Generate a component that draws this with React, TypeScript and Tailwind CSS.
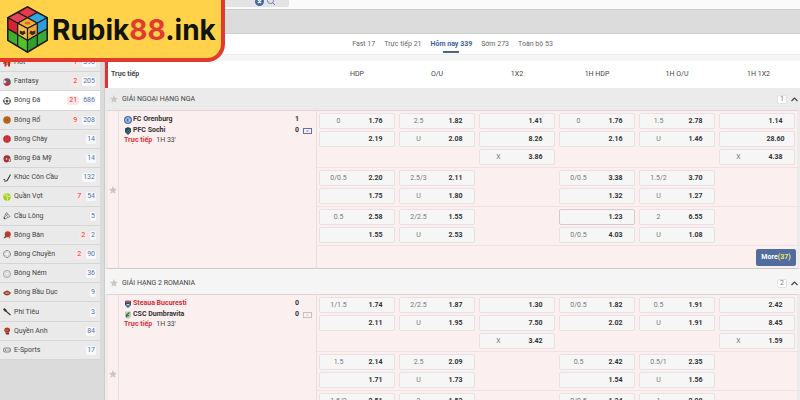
import type { ReactNode } from "react"
import clsx from "clsx"

type Sport = {
	name: string
	live?: number
	total: number
	icon: ReactNode
	active?: boolean
}

// [label, price]
type Odd = [string, string]

type Match = {
	home: string
	away: string
	homeColor: string
	score: [number, number]
	time: string
	more: number
	crests: [ReactNode, ReactNode]
	stream: boolean
	lines: Odd[][][]
}

type League = { name: string; count: number; hovered?: boolean; match: Match }

const sports: Sport[] = [
	{
		name: "Hot",
		live: 1,
		total: 390,
		icon: (
			<>
				<path d="M0 8 8 1l8 7-2 1v6h-4v-4H7v4H3V9L1 10z" fill="#b8331f" />
				<path d="M8 5c2 2 3 3 2 5H6c0-2 2-3 2-5z" fill="#e9813a" />
			</>
		),
	},
	{
		name: "Fantasy",
		live: 2,
		total: 205,
		icon: (
			<>
				<circle cx="8" cy="8" r="7.5" fill="#51657c" />
				<path d="M8 8V0.500a7.500 7.500 0 0 0-6.500 11z" fill="#d8dde3" />
				<path d="M8 8V0.500a7.500 7.500 0 0 0-6 3z" fill="#cf2e35" />
				<path d="M8 8 3 13.500a7.500 7.500 0 0 0 12-3z" fill="#cf2e35" />
			</>
		),
	},
	{
		name: "Bóng Đá",
		live: 21,
		total: 686,
		active: true,
		icon: (
			<>
				<circle cx="8" cy="8" r="6.8" fill="#fff" stroke="#555" strokeWidth="1.4" />
				<path d="m8 5 3 2-1 4H6L5 7z" fill="#555" />
				<path d="M6 1h4L8 3zM1 6l2 2-1 3zM15 6l-2 2 1 3zM4 14l1-2 2 2zM12 14l-1-2-2 2z" fill="#444" stroke="#444" />
			</>
		),
	},
	{
		name: "Bóng Rổ",
		live: 9,
		total: 208,
		icon: (
			<>
				<circle cx="8" cy="8" r="7.5" fill="#c0651c" />
				<path d="M8 1v14M1 8h14M3 3c4 3 4 7 0 10M13 3c-4 3-4 7 0 10" stroke="#a3541a" fill="none" />
			</>
		),
	},
	{
		name: "Bóng Chày",
		total: 14,
		icon: (
			<>
				<circle cx="8" cy="8" r="7.5" fill="#c8222c" />
				<path d="M4 2c3 4 3 8 0 12M12 2c-3 4-3 8 0 12" stroke="#e06a70" fill="none" />
			</>
		),
	},
	{
		name: "Bóng Đá Mỹ",
		total: 14,
		icon: (
			<>
				<path d="M1 8a7 7 0 0 1 14-1l-4 1 1 4-4 3a7 7 0 0 1-7-7z" fill="#b52a2a" />
				<path d="M8 8h7v5h-4M5 4l4 1" stroke="#5b6470" strokeWidth="1.5" fill="none" />
				<circle cx="7" cy="8" r="1.6" fill="#eee" />
			</>
		),
	},
	{
		name: "Khúc Côn Cầu",
		total: 132,
		icon: (
			<>
				<path d="M15 1 9 12q-1 2-3 2H2" stroke="#3c3c3c" strokeWidth="2.2" fill="none" />
				<ellipse cx="2.5" cy="11" rx="2" ry="1" fill="#3c3c3c" />
			</>
		),
	},
	{
		name: "Quần Vợt",
		live: 7,
		total: 54,
		icon: (
			<>
				<circle cx="8" cy="8" r="7.5" fill="#a6cf1d" />
				<path d="M2 4c5 0 8 4 7 11M7 1c0 4 3 7 8 6" stroke="#ecf7b8" strokeWidth="1.5" fill="none" />
			</>
		),
	},
	{
		name: "Cầu Lông",
		total: 5,
		icon: (
			<>
				<path d="m7 1 7 8-9 4-3-3z" fill="#f4f4f4" stroke="#555" strokeWidth="1.3" />
				<path d="m6 4 4 7M4 10l6-6" stroke="#555" />
				<path d="M2 10a2.5 2.5 0 0 0 3 4z" fill="#444" />
			</>
		),
	},
	{
		name: "Bóng Bàn",
		live: 2,
		total: 2,
		icon: (
			<>
				<circle cx="9.5" cy="6.5" r="6" fill="#b93a30" />
				<path d="m5 9-4 5 1 1 6-3z" fill="#7d4a2c" />
				<circle cx="13" cy="13" r="1.8" fill="#d66a52" />
			</>
		),
	},
	{
		name: "Bóng Chuyền",
		live: 2,
		total: 90,
		icon: (
			<>
				<circle cx="8" cy="8" r="6.8" fill="#f4f4f4" stroke="#666" strokeWidth="1.8" strokeDasharray="6 1" />
				<circle cx="8" cy="8" r="4" fill="none" stroke="#bbb" />
			</>
		),
	},
	{
		name: "Bóng Ném",
		total: 36,
		icon: (
			<>
				<circle cx="8" cy="8" r="7" fill="#eee" stroke="#777" strokeWidth="1.2" />
				<path d="m8 4 4 3-2 5H6L4 7z" fill="none" stroke="#bbb" />
			</>
		),
	},
	{
		name: "Bóng Bầu Dục",
		total: 9,
		icon: (
			<>
				<path d="M0 8q8-10 16 0-8 10-16 0z" fill="#93412c" />
				<path d="M4 8h8M6 7v2M8 7v2M10 7v2" stroke="#f0d9cf" />
			</>
		),
	},
	{
		name: "Phi Tiêu",
		total: 3,
		icon: (
			<>
				<path d="m2 2 6 6 7 6" stroke="#4a3a30" strokeWidth="2.4" fill="none" />
				<path d="M0 3 3 0l4 4 1 4-4-1z" fill="#3b332d" />
			</>
		),
	},
	{
		name: "Quyền Anh",
		total: 84,
		icon: (
			<>
				<path d="M3 4q0-3 5-3t6 3v4l-2 3H5L2 7z" fill="#b3392d" />
				<path d="M5 11h7v4H6z" fill="#7d2b24" />
				<path d="M4 6h5v2" stroke="#e08a80" fill="none" />
			</>
		),
	},
	{
		name: "E-Sports",
		total: 17,
		icon: (
			<>
				<rect x="0.8" y="4" width="14.4" height="8" rx="3.5" fill="#eee" stroke="#555" strokeWidth="1.4" />
				<path d="M3 8h4M5 6v4" stroke="#555" />
				<circle cx="10" cy="8" r="1" fill="#555" />
				<circle cx="12.5" cy="8" r="1" fill="#555" />
			</>
		),
	},
]

const tabs = [
	{ name: "Fast", count: 17 },
	{ name: "Trực tiếp", count: 21 },
	{ name: "Hôm nay", count: 339, active: true },
	{ name: "Sớm", count: 273 },
	{ name: "Toàn bộ", count: 53 },
]

const markets = ["HDP", "O/U", "1X2", "1H HDP", "1H O/U", "1H 1X2"]

const leagues: League[] = [
	{
		name: "GIẢI NGOẠI HẠNG NGA",
		count: 1,
		hovered: true,
		match: {
			home: "FC Orenburg",
			away: "PFC Sochi",
			homeColor: "text-[#333333]",
			score: [1, 0],
			time: "1H 33'",
			more: 37,
			stream: true,
			crests: [
				<>
					<circle cx="8" cy="8" r="8" fill="#4a70b4" />
					<circle cx="8" cy="8" r="4.5" fill="none" stroke="#dfe8f7" strokeWidth="1.8" />
					<path d="M8 8h4" stroke="#dfe8f7" strokeWidth="1.5" />
				</>,
				<>
					<path d="M2 3 8 0l6 3v7l-6 6-6-6z" fill="#23475c" />
					<path d="m4 11 7-7M7 13l6-6" stroke="#4e8f7d" strokeWidth="1.8" />
				</>,
			],
			lines: [
				[
					[["0", "1.76"], ["", "2.19"]],
					[["2.5", "1.82"], ["U", "2.08"]],
					[["", "1.41"], ["", "8.26"], ["X", "3.86"]],
					[["0", "1.76"], ["", "2.16"]],
					[["1.5", "2.78"], ["U", "1.46"]],
					[["", "1.14"], ["", "28.60"], ["X", "4.38"]],
				],
				[
					[["0/0.5", "2.20"], ["", "1.75"]],
					[["2.5/3", "2.11"], ["U", "1.80"]],
					[],
					[["0/0.5", "3.38"], ["", "1.32"]],
					[["1.5/2", "3.70"], ["U", "1.27"]],
					[],
				],
				[
					[["0.5", "2.58"], ["", "1.55"]],
					[["2/2.5", "1.55"], ["U", "2.53"]],
					[],
					[["", "1.23"], ["0/0.5", "4.03"]],
					[["2", "6.55"], ["U", "1.08"]],
					[],
				],
			],
		},
	},
	{
		name: "GIẢI HẠNG 2 ROMANIA",
		count: 2,
		match: {
			home: "Steaua Bucuresti",
			away: "CSC Dumbravita",
			homeColor: "text-[#cf2f35]",
			score: [0, 0],
			time: "1H 33'",
			more: 24,
			stream: false,
			crests: [
				<>
					<path d="M2 2h12v8l-6 6-6-6z" fill="#344a78" />
					<path d="M3 1h10v4H3z" fill="#b9575c" />
					<path d="M5 8h6v3H5z" fill="#c8cfdc" />
				</>,
				<>
					<path d="M2 1h12v10l-6 5-6-5z" fill="#b7cfae" />
					<path d="M5 13V8l6-5M5 9h5" stroke="#3f6f49" strokeWidth="2.5" fill="none" />
				</>,
			],
			lines: [
				[
					[["1/1.5", "1.74"], ["", "2.11"]],
					[["2/2.5", "1.87"], ["U", "1.95"]],
					[["", "1.30"], ["", "7.50"], ["X", "3.42"]],
					[["0/0.5", "1.82"], ["", "2.02"]],
					[["0.5", "1.91"], ["U", "1.91"]],
					[["", "2.42"], ["", "8.45"], ["X", "1.59"]],
				],
				[
					[["1.5", "2.14"], ["", "1.71"]],
					[["2.5", "2.09"], ["U", "1.73"]],
					[],
					[["0.5", "2.42"], ["", "1.54"]],
					[["0.5/1", "2.35"], ["U", "1.56"]],
					[],
				],
				[
					[["1.5/2", "2.51"], ["", "1.50"]],
					[["2", "1.53"], ["U", "2.46"]],
					[],
					[["0/0.5", "1.34"], ["", "3.24"]],
					[["1", "2.98"], ["U", "1.38"]],
					[],
				],
			],
		},
	},
]

export default function App() {
	return (
		<div className="relative flex h-screen flex-col overflow-hidden bg-[#dbdbdb] font-['Roboto',sans-serif] text-[7px] leading-none text-[#444444]">
			<SearchBar />
			<div className="h-6 shrink-0 border-b border-[#cfcfcf] bg-[#dcdcdc]" />
			<div className="flex min-h-0 flex-1">
				<Sidebar />
				<main className="min-w-0 flex-1 overflow-hidden bg-[#f5f5f5]">
					<Tabs />
					<OddsTable />
				</main>
			</div>
			<Brand />
		</div>
	)
}

function SearchBar() {
	return (
		<header className="flex h-[10px] shrink-0 items-end overflow-hidden border-b border-[#cccccc] bg-[#fafafa] pb-[2px]">
			<form className="ml-28 flex h-3 w-[177px] items-center gap-[3px] rounded-xs bg-[#e4e4e4] pr-[14px]">
				<input aria-label="Tìm kiếm" className="min-w-0 flex-1 bg-transparent outline-none" />
				<button type="button" aria-label="Xóa">
					<svg viewBox="0 0 16 16" className="size-[9px]">
						<circle cx="8" cy="8" r="8" fill="#4667a3" />
						<path d="m5 5 6 6M11 5l-6 6" stroke="#fff" strokeWidth="2" />
					</svg>
				</button>
				<button type="button" aria-label="Tìm">
					<svg viewBox="0 0 16 16" className="size-2" fill="none" stroke="#5a76a8" strokeWidth="1.8">
						<circle cx="7" cy="7" r="6" />
						<path d="m11 11 5 5" />
					</svg>
				</button>
			</form>
		</header>
	)
}

function Brand() {
	return (
		<a
			href="#"
			className="absolute top-0 left-0 flex h-[62px] w-[225px] items-center gap-1 rounded-br-[18px] border-r-4 border-b-4 border-[#e23a2d] bg-[#ffd24a] pt-px pl-[7px] font-['Inter',sans-serif] text-[28px] font-bold text-[#11140c]"
		>
			<svg viewBox="0 0 42 48" className="h-[47px] w-[41px] shrink-0" stroke="#1c1c1c" strokeWidth="1.2" strokeLinejoin="round">
				<path d="M21 1 41 12v23L21 47 1 35V12z" fill="#1c1c1c" strokeWidth="2" />
				<path d="m21 1 10 5.500-10 5.500-10-5.500z" fill="#e8394a" />
				<path d="m11 6.500 10 5.500-10 5.500L1 12z" fill="#e5455a" />
				<path d="m31 6.500 10 5.500-10 5.500L21 12z" fill="#2fa6df" />
				<path d="m1 12 10 5.500V29L1 23.500z" fill="#d8232f" />
				<path d="m1 23.500 10 5.500v12L1 35z" fill="#3fae2a" />
				<path d="m11 29 10 6v12l-10-6z" fill="#4fc22c" />
				<path d="m41 12-10 5.500V29l10-5.500z" fill="#2a9fe0" />
				<path d="m41 23.500-10 5.500v12l10-6z" fill="#3aa935" />
				<path d="m31 29-10 6v12l10-6z" fill="#2f9e2c" />
				<path d="m21 12 10 5.500L21 23l-10-5.500z" fill="#f5b12c" />
				<path d="m11 17.500 10 5.500v12l-10-6z" fill="#f4c04d" />
				<path d="m31 17.500-10 5.500v12l10-6z" fill="#eea63a" />
				<ellipse cx="21" cy="17.500" rx="3" ry="1.500" fill="#e0662b" stroke="none" />
				<path d="m13 25 3 1 2-1 1 3-3 2-3-2zM29 25l-3 1-2-1-1 3 3 2 3-2z" fill="#3a2a14" stroke="none" />
			</svg>
			<span>
				Rubik<span className="text-[#e23a2d]">88</span>.ink
			</span>
		</a>
	)
}

function Sidebar() {
	return (
		<nav className="w-[105px] shrink-0 border-r border-[#cdcdcd] pt-[19px] pr-1">
			<ul className="grid h-[307px] auto-rows-fr">
				{sports.map((sport) => (
					<li key={sport.name} className="flex">
						<a
							href="#"
							className={clsx(
								"flex flex-1 items-center gap-[3px] border-b border-[#d6d6d6] pt-px pr-1 pl-[3px]",
								sport.active ? "bg-white" : "bg-[#eaeaea]",
							)}
						>
							<svg viewBox="0 0 16 16" className="size-2 shrink-0">
								{sport.icon}
							</svg>
							<span className="flex-1 whitespace-nowrap">{sport.name}</span>
							{sport.live && (
								<span className="rounded-xs bg-[#fde6e6] px-[2px] py-px text-[#d23b40]">{sport.live}</span>
							)}
							<span className="rounded-xs bg-[#f8f9fc] px-px py-px text-[#5874a6]">{sport.total}</span>
						</a>
					</li>
				))}
			</ul>
		</nav>
	)
}

function Tabs() {
	return (
		<div className="mb-[6px] flex h-[21px] justify-center gap-[9px] border-b border-[#eeeeee] bg-white">
			{tabs.map((tab) => (
				<button
					key={tab.name}
					type="button"
					className={clsx(
						"flex flex-col items-center pt-[7px]",
						tab.active ? "font-bold text-[#42629a]" : "text-[#666666]",
					)}
				>
					<span>
						{tab.name} {tab.count}
					</span>
					{tab.active && <span className="mt-[3px] h-[2px] w-4 bg-[#4b6586]" />}
				</button>
			))}
		</div>
	)
}

function OddsTable() {
	return (
		<table className="w-full table-fixed border-separate border-spacing-0">
			<colgroup>
				<col className="w-[14px]" />
				<col />
				{markets.map((market, i) => (
					<col key={market} className={i === markets.length - 1 ? "w-[83px]" : "w-20"} />
				))}
			</colgroup>
			<thead>
				<tr className="h-[27px] bg-white">
					<th colSpan={2} className="border-l-[3px] border-[#d9333a] pl-[3px] text-left font-bold">
						Trực tiếp
					</th>
					{markets.map((market) => (
						<th key={market} className="font-normal">
							{market}
						</th>
					))}
				</tr>
			</thead>
			{leagues.map((league) => (
				<LeagueBody key={league.name} league={league} />
			))}
		</table>
	)
}

function LeagueBody({ league }: { league: League }) {
	const { match } = league

	return (
		<tbody>
			<tr className={league.hovered ? "bg-[#ebebeb]" : "bg-[#f5f5f5]"}>
				<th colSpan={8} className={clsx("p-0 font-normal", !league.hovered && "pt-[3px]")}>
					<div className="flex h-[22px] items-center gap-1 pr-[2px] pl-[5px]">
						<Star />
						<span className="flex-1 text-left">{league.name}</span>
						<span className="rounded-xs border border-[#e2e2e2] bg-white px-[2px] text-[#777777]">{league.count}</span>
						<button type="button" aria-label="Thu gọn">
							<svg viewBox="0 0 14 10" className="h-[5px] w-[7px]" fill="none" stroke="#444" strokeWidth="2.4">
								<path d="m1 8 6-6 6 6" />
							</svg>
						</button>
					</div>
				</th>
			</tr>
			{match.lines.map((line, row) => (
				<tr key={row} className="bg-[#fcefef]">
					{row === 0 && (
						<>
							<td
								rowSpan={4}
								className="border-t border-r border-b border-l-[3px] border-t-[#dfd3d3] border-r-[#eadede] border-b-[#cfcaca] border-l-[#ececec] p-0 align-middle"
							>
								<Star />
							</td>
							<td
								rowSpan={4}
								className="border-t border-r border-b border-t-[#dfd3d3] border-r-[#eadede] border-b-[#cfcaca] pt-[3px] pr-1 pb-0 pl-[5px] align-top"
							>
								<Teams match={match} />
							</td>
						</>
					)}
					{line.map((odds, i) => (
						<td
							key={i}
							className={clsx(
								"border-b border-[#f3e2e2] p-[2px] align-top",
								row === 0 && "border-t border-t-[#dfd3d3]",
								i === line.length - 1 && "border-r-[3px] border-r-[#ececec]",
							)}
						>
							<div className="flex flex-col gap-[2px]">
								{odds.map((odd, n) => (
									<OddButton key={n} odd={odd} changed={odd[1] === "1.23"} />
								))}
							</div>
						</td>
					))}
				</tr>
			))}
			<tr className="bg-[#fcefef]">
				<td
					colSpan={6}
					className="border-r-[3px] border-b border-r-[#ececec] border-b-[#cfcaca] px-px pt-[3px] pb-[2px] text-right"
				>
					<button type="button" className="ml-auto block h-[17px] w-10 rounded-xs bg-[#506d9e] text-center font-bold text-white">
						More<span className="text-[#f0e56a]">({match.more})</span>
					</button>
				</td>
			</tr>
		</tbody>
	)
}

function Teams({ match }: { match: Match }) {
	return (
		<div className="flex flex-col">
			<TeamRow name={match.home} crest={match.crests[0]} score={match.score[0]} color={match.homeColor} />
			<TeamRow name={match.away} crest={match.crests[1]} score={match.score[1]} color="text-[#333333]">
				<svg viewBox="0 0 18 12" className="h-[6px] w-[9px]" stroke={match.stream ? "#5c6fae" : "#c4c0c4"} fill="none">
					<rect x="1" y="1" width="16" height="10" strokeWidth="2" />
					<path d="M7 6h4" strokeWidth="2" />
				</svg>
			</TeamRow>
			<div className="flex h-[9px] items-center gap-1">
				<span className="font-bold text-[#d8343a]">Trực tiếp</span>
				<span>{match.time}</span>
			</div>
		</div>
	)
}

function TeamRow({
	name,
	crest,
	score,
	color,
	children,
}: {
	name: string
	crest: ReactNode
	score: number
	color: string
	children?: ReactNode
}) {
	return (
		<div className="flex h-[11px] items-center gap-px font-bold text-[#333333]">
			<svg viewBox="0 0 16 16" className="size-2 shrink-0">
				{crest}
			</svg>
			<span className={clsx("flex-1", color)}>{name}</span>
			<span>{score}</span>
			<span className="ml-[3px] flex w-[9px]">{children}</span>
		</div>
	)
}

function OddButton({ odd, changed }: { odd: Odd; changed: boolean }) {
	const [label, price] = odd

	return (
		<button
			type="button"
			className={clsx(
				"grid h-4 w-full grid-cols-2 items-center rounded-xs border bg-[#f7f6f6] text-center",
				changed ? "border-[#d3cccc]" : "border-[#e9e1e1]",
			)}
		>
			<span className="text-[#777777]">{label}</span>
			<span className="font-bold text-[#333333]">{price}</span>
		</button>
	)
}

function Star() {
	return (
		<svg viewBox="0 0 16 16" className="mx-auto size-2 shrink-0" fill="#c9c6c6">
			<path d="m8 0 2.300 5.300 5.700.5-4.300 3.800L13 15.500 8 12.300 3 15.500l1.300-5.900L0 5.800l5.700-.5z" />
		</svg>
	)
}
